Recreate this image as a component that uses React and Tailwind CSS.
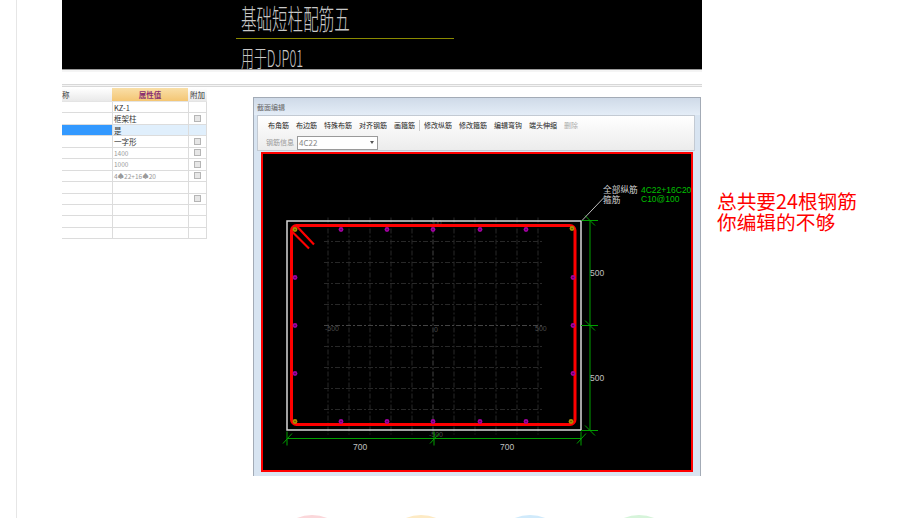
const rows = [
  { value: 'KZ-1', strong: true },
  { value: '框架柱', check: true },
  { value: '是', selected: true },
  { value: '一字形', check: true },
  { value: '1400', muted: true, check: true, tick: true },
  { value: '1000', muted: true, check: true, tick: true },
  { value: '4♠22+16♠20', muted: true, check: true },
  { value: '' },
  { value: '', check: true },
  { value: '' },
  { value: '' },
  { value: '' },
];

const tools = ['布角筋', '布边筋', '特殊布筋', '对齐钢筋', '画箍筋'];
const tools2 = ['修改纵筋', '修改箍筋', '编辑弯钩', '端头伸缩'];

const gridX = [328, 349, 370, 391, 412, 433, 454, 475, 496, 517, 538];
const gridY = [241, 262, 283, 304, 325, 346, 367, 388, 409];
const barsTop = [341, 387, 433, 480, 526];
const barsSide = [277, 325, 373];

function Bar({ x, y, corner }) {
  return (
    <g>
      <circle cx={x} cy={y} r="2.4" fill={corner ? '#a89000' : '#a000a0'} />
      <circle cx={x} cy={y} r="0.8" fill={corner ? '#5a5000' : '#500050'} />
    </g>
  );
}

function Section() {
  return (
    <svg viewBox="263 154 428 315" className="block h-full w-full font-['Liberation_Sans','Noto_Sans_CJK_SC',sans-serif]">
      {/* dashed layout grid */}
      <g strokeWidth="1" strokeDasharray="5 2 2 2">
        {gridX.map((x) => (
          <line key={x} x1={x} y1="217" x2={x} y2="434" stroke={x === 433 ? '#444444' : '#282828'} />
        ))}
        {gridY.map((y) => (
          <line key={y} x1="324" y1={y} x2="543" y2={y} stroke={y === 325 ? '#444444' : '#282828'} />
        ))}
      </g>
      <g fill="#4a4a4a" fontSize="7">
        <text x="325" y="330">-500</text>
        <text x="434" y="331">0</text>
        <text x="535" y="330">500</text>
        <text x="430" y="224">500</text>
        <text x="429" y="436">-500</text>
      </g>

      <rect x="287" y="220.5" width="294" height="209" fill="none" stroke="#d8d8d8" strokeWidth="1.5" />
      <rect x="291.5" y="225" width="283.5" height="199" rx="5" fill="none" stroke="#ff0000" strokeWidth="3" />
      <line x1="291" y1="230" x2="309" y2="248" stroke="#ff0000" strokeWidth="2.2" />
      <line x1="297" y1="226" x2="314" y2="244" stroke="#ff0000" strokeWidth="2.2" />

      <Bar x={295} y={229} corner />
      <Bar x={572} y={228} corner />
      <Bar x={295} y={421} corner />
      <Bar x={571} y={421} corner />
      {barsTop.map((x) => (
        <g key={x}>
          <Bar x={x} y={229} />
          <Bar x={x} y={421} />
        </g>
      ))}
      {barsSide.map((y) => (
        <g key={y}>
          <Bar x={295} y={y} />
          <Bar x={573} y={y} />
        </g>
      ))}

      {/* dimensions */}
      <g stroke="#00a000" strokeWidth="1" fill="none">
        <path d="M590 220V430M581 220H598M581 325H598M581 430H598" />
        <path d="M585 215L595 225M585 320L595 330M585 425L595 435" />
        <path d="M287 438H581M287 431V445M434 431V445M581 431V445" />
        <path d="M283 443L292 433M430 443L439 433M577 443L586 433" />
      </g>
      <g fill="#c0c0c0" fontSize="8.5" fontFamily="Liberation Sans">
        <text x="590" y="275">500</text>
        <text x="590" y="380">500</text>
        <text x="353" y="449">700</text>
        <text x="500" y="449">700</text>
      </g>

      <path d="M582 220L604 197" stroke="#bdbdbd" strokeWidth="1" fill="none" />
      <g fill="#d0d0d0" fontSize="8.7">
        <text x="603" y="192">全部纵筋</text>
        <text x="603" y="202">箍筋</text>
      </g>
      <g fill="#00c000" fontSize="8.5" fontFamily="Liberation Sans">
        <text x="641" y="192">4C22+16C20</text>
        <text x="641" y="201">C10@100</text>
      </g>
    </svg>
  );
}

export default function App() {
  return (
    <div className="flex h-[518px] w-[897px] overflow-hidden bg-white font-['Noto_Sans_CJK_SC','Liberation_Sans',sans-serif]">
      <div className="h-full w-[17px] shrink-0 border-r border-[#e6e6e6]" />

      <div className="ml-[45px] flex w-[640px] shrink-0 flex-col">
        <div className="h-[70px] shrink-0 overflow-hidden border-b border-[#9a9a9a] bg-black">
          <div className="ml-[179px] h-[34px] w-fit origin-left scale-x-[0.555] whitespace-nowrap pt-[2px] text-[28px] leading-[32px] font-light text-[#c8c8c8]">
            基础短柱配筋五
          </div>
          <div className="ml-[174px] mt-[4px] h-px w-[218px] bg-[#8a8a00]" />
          <div className="ml-[179px] w-fit origin-left scale-x-[0.56] whitespace-nowrap pt-[3px] text-[23px] leading-[30px] font-light text-[#c8c8c8]">
            用于DJP01
          </div>
        </div>
        <div className="h-[2px] shrink-0 bg-[#f4f4f4]" />

        <div className="mt-[12px] h-[3px] shrink-0 border-y border-[#d8d8d8] bg-[#f4f4f4]" />

        <div className="flex shrink-0 items-start">
          <div className="mt-px w-[145px] shrink-0 text-[7.5px] text-[#333]">
            <div className="flex h-[14px] border-b border-[#e4e4e4]">
              <div className="w-[50px] bg-gradient-to-b from-white to-[#e9e9e9] leading-[13px]">称</div>
              <div className="w-[76px] bg-gradient-to-b from-[#f9dfa8] to-[#f4c673] text-center leading-[13px] font-bold text-[#8a2f70]">
                属性值
              </div>
              <div className="w-[19px] bg-gradient-to-b from-white to-[#e9e9e9] text-center leading-[13px]">附加</div>
            </div>
            {rows.map((row, i) => (
              <div key={i} className="flex h-[11.45px] border-b border-[#dcdcdc] leading-[11px]">
                <div className={row.selected ? 'w-[50px] bg-[#3399ff]' : 'w-[50px] bg-white'} />
                <div
                  className={
                    'w-[76px] border-l border-[#dcdcdc] pl-px ' +
                    (row.selected ? 'bg-[#e0effc] ' : 'bg-white ') +
                    (row.muted ? 'text-[6.5px] text-[#999]' : '')
                  }
                >
                  {row.value}
                </div>
                <div className={'flex w-[19px] items-center justify-center border-x border-[#dcdcdc] ' + (row.selected ? 'bg-[#e0effc]' : 'bg-white')}>
                  {row.check && <div className="h-[7px] w-[7px] border border-[#b5b5b5] bg-[#e6e6e6]" />}
                </div>
              </div>
            ))}
          </div>

          <div className="ml-[46px] mt-[10px] h-[379px] w-[448px] shrink-0 border border-b-0 border-[#a3abb6] bg-[#d8e4f1]">
            <div className="h-[17px] bg-gradient-to-b from-[#cfdae8] to-[#e4edf7] pl-[3px] text-[7px] leading-[18px] text-[#666]">
              截面编辑
            </div>
            <div className="ml-[3px] mr-[5px] h-[36px] border border-[#c3cad3] bg-gradient-to-b from-white to-[#ececec]">
              <div className="flex h-[19px] items-center gap-[7px] pl-[10px] text-[7px] whitespace-nowrap text-[#222]">
                {tools.map((t) => (
                  <span key={t}>{t}</span>
                ))}
                <div className="-mx-[3px] h-[11px] w-px bg-[#c8c8c8]" />
                {tools2.map((t) => (
                  <span key={t}>{t}</span>
                ))}
                <span className="text-[#aaa]">删除</span>
              </div>
              <div className="flex h-[15px] items-center pl-[8px] text-[7px] text-[#999]">
                <span className="w-[31px]">钢筋信息</span>
                <div className="flex h-[14px] w-[81px] items-center justify-between border border-[#9a9a9a] bg-white px-px text-[8px] text-[#888]">
                  4C22
                  <span className="mr-[2px] h-0 w-0 border-x-[2px] border-t-[3px] border-x-transparent border-t-[#555]" />
                </div>
              </div>
            </div>
            <div className="ml-[7px] mr-[7px] mt-[1px] h-[320px] border-2 border-[#ff0000] bg-black">
              <Section />
            </div>
          </div>

          <div className="ml-[16px] mt-[103px] w-[150px] shrink-0 text-[19.7px] leading-[21px] text-[#ff0000]">
            总共要24根钢筋
            <br />
            你编辑的不够
          </div>
        </div>

        <div className="ml-[210px] mt-[39px] flex shrink-0 gap-[29px]">
          <div className="h-20 w-20 shrink-0 rounded-full bg-[#fbd7da]" />
          <div className="h-20 w-20 shrink-0 rounded-full bg-[#fdeac4]" />
          <div className="h-20 w-20 shrink-0 rounded-full bg-[#d0eafb]" />
          <div className="h-20 w-20 shrink-0 rounded-full bg-[#d6f4da]" />
        </div>
      </div>
    </div>
  );
}
